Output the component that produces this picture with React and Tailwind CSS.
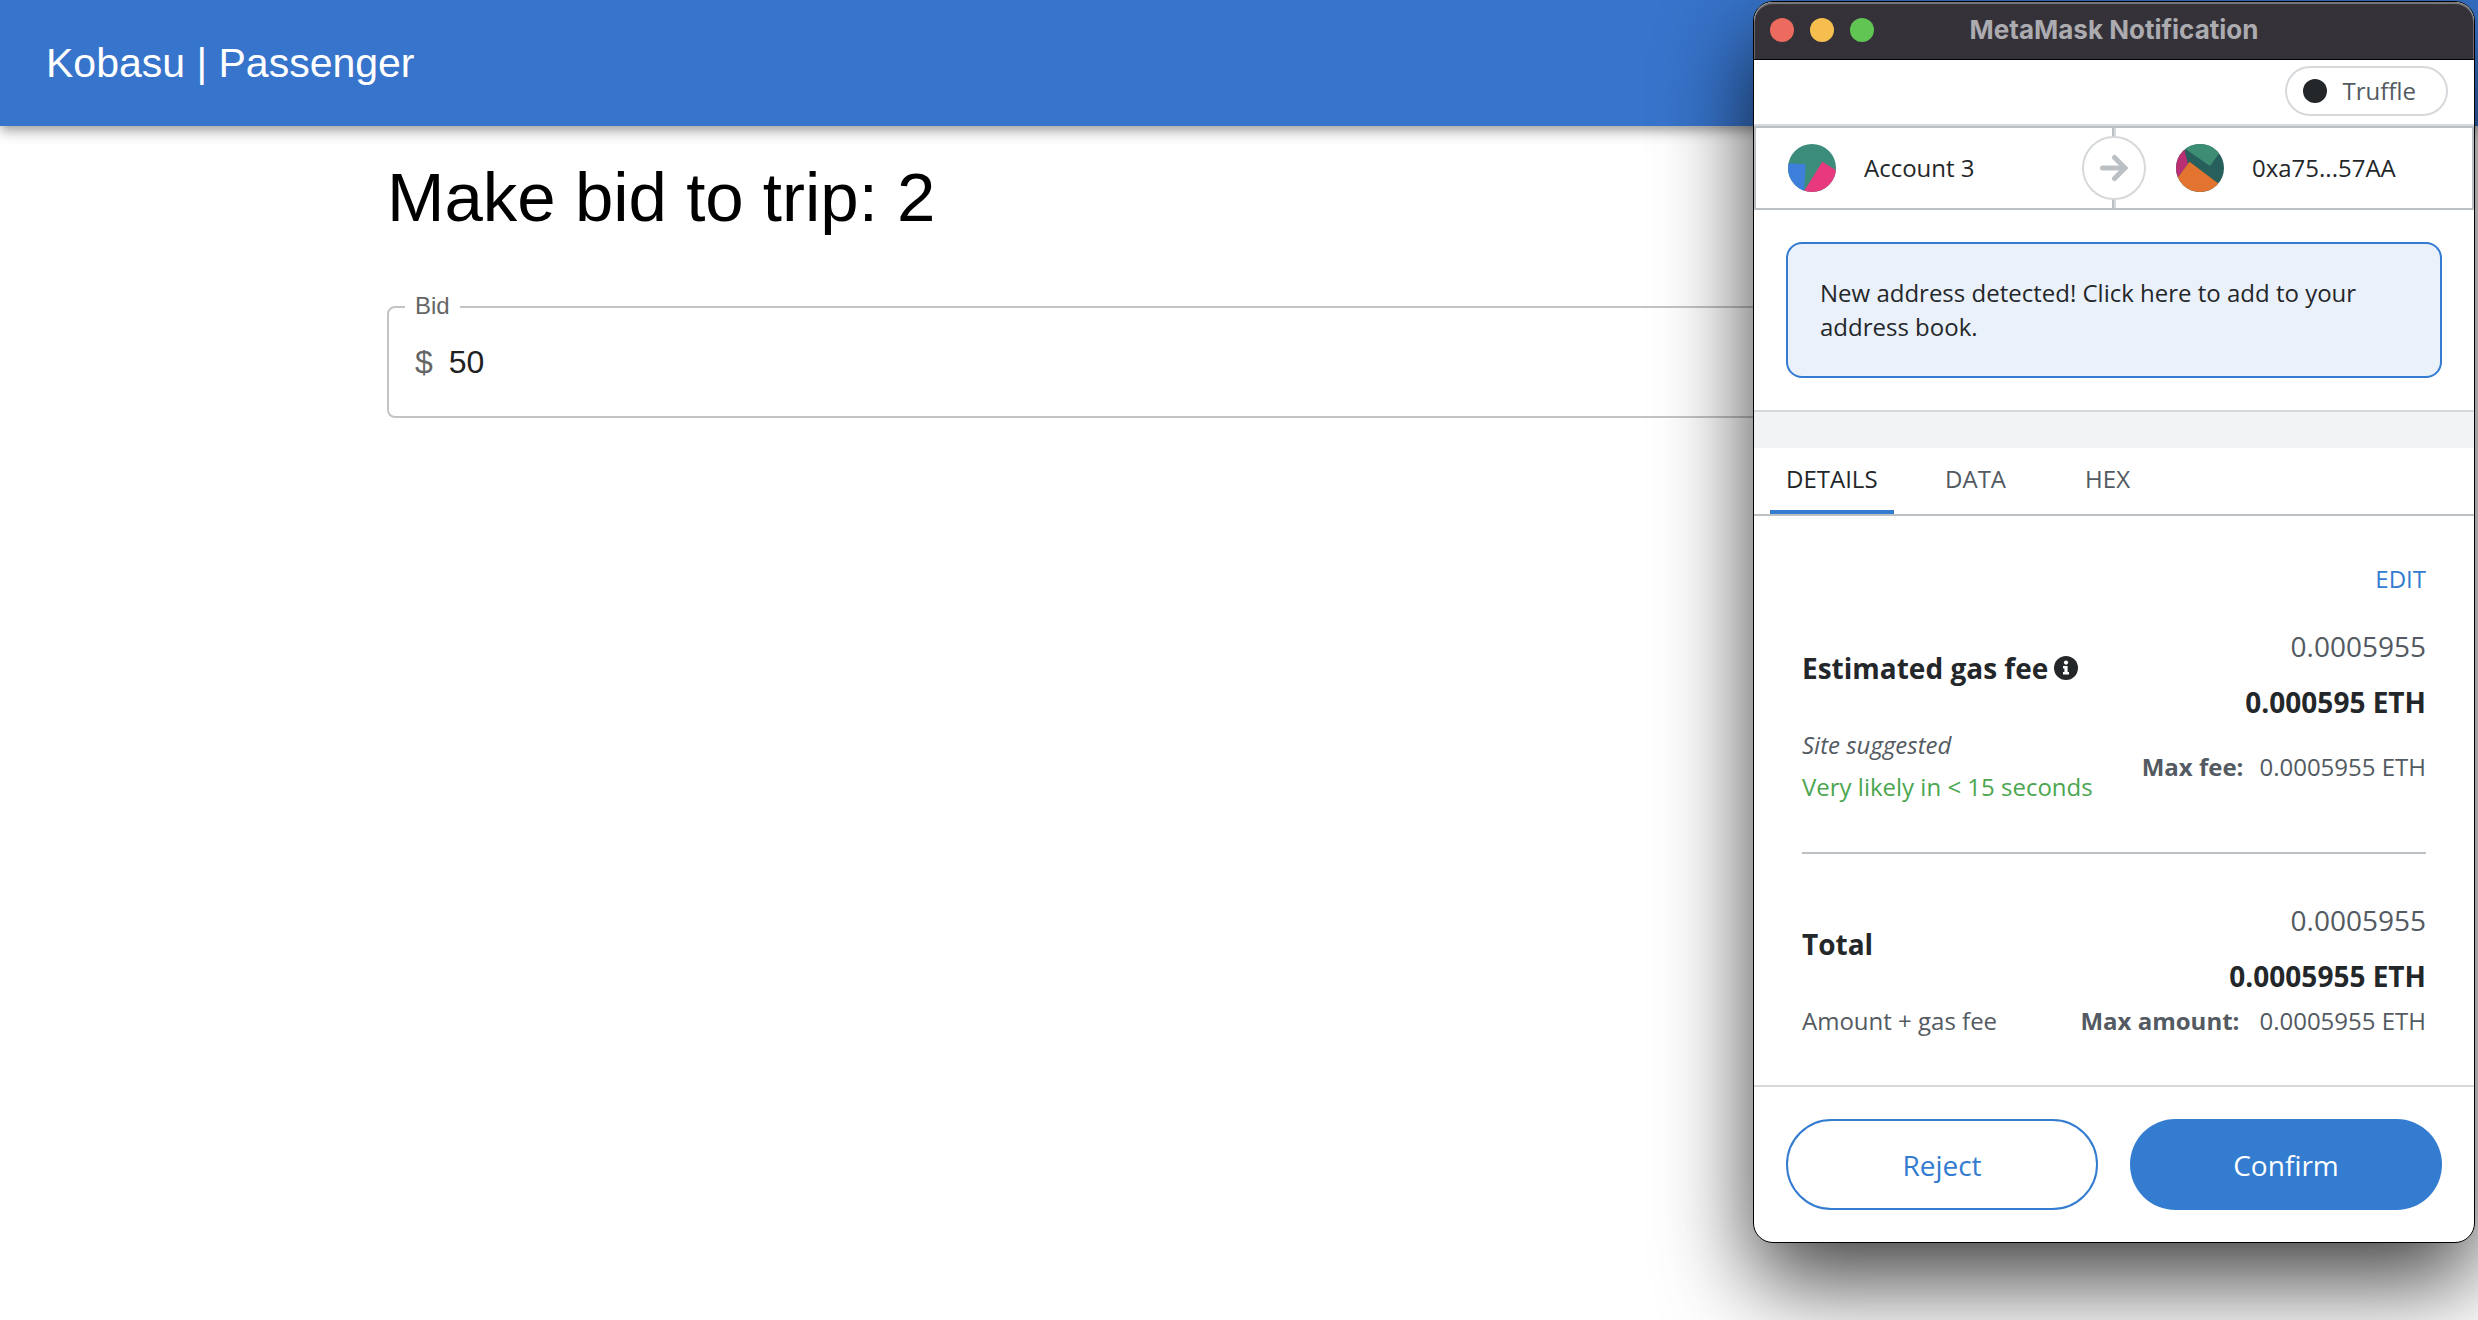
import React from "react";

function AppBar() {
  return (
    <header className="flex h-[126px] items-center bg-[#3774cb] px-[46px] shadow-[0_4px_8px_-2px_rgba(0,0,0,0.2),0_8px_10px_rgba(0,0,0,0.14),0_2px_20px_rgba(0,0,0,0.12)]">
      <span className="text-[41px] leading-[62px] text-white">Kobasu | Passenger</span>
    </header>
  );
}

function BidForm() {
  return (
    <main className="mx-auto max-w-[1800px] px-12 pt-[30px]">
      <h1 className="text-[69px] leading-[84px] text-black">Make bid to trip: 2</h1>
      <div className="relative mt-[66px] flex h-28 items-center gap-4 rounded-lg border-2 border-[#c4c4c4] px-[26px] text-[32px]">
        <label htmlFor="bid" className="absolute -top-4 left-4 bg-white px-[10px] text-[24px] leading-[28px] text-[#666666]">
          Bid
        </label>
        <span className="text-[#666666]">$</span>
        <input
          id="bid"
          type="text"
          inputMode="decimal"
          defaultValue="50"
          className="min-w-0 flex-1 bg-transparent text-[#212121] outline-none"
        />
      </div>
    </main>
  );
}

function TitleBar() {
  return (
    <div className="grid h-[58px] grid-cols-[1fr_auto_1fr] items-center rounded-t-[19px] border-b border-black bg-[#343238] px-4 pb-[2px] shadow-[inset_0_2px_1px_rgba(255,255,255,0.35),inset_1px_0_0_rgba(255,255,255,0.25),inset_-1px_0_0_rgba(255,255,255,0.25)]">
      <div className="flex gap-4">
        <button type="button" aria-label="Close" className="size-6 rounded-full bg-[#ed6a5e]" />
        <button type="button" aria-label="Minimize" className="size-6 rounded-full bg-[#f5be4f]" />
        <button type="button" aria-label="Zoom" className="size-6 rounded-full bg-[#61c554]" />
      </div>
      <h2 className="font-['Inter',sans-serif] text-[26px] leading-[32px] font-bold text-[#acabb0]">
        MetaMask Notification
      </h2>
    </div>
  );
}

function Network() {
  return (
    <div className="flex justify-end border-b-2 border-[#d6d9dc] px-[26px] pt-[6px] pb-2">
      <div className="flex h-[50px] items-center gap-4 rounded-full border-2 border-[#d6d9dc] pr-[30px] pl-4 text-[#535a61]">
        <span className="size-6 rounded-full bg-[#24272a]" />
        Truffle
      </div>
    </div>
  );
}

function AvatarOne() {
  return (
    <svg viewBox="0 0 48 48" className="size-12 rounded-full" aria-hidden="true">
      <rect width="48" height="48" fill="#3c8c7c" />
      <path d="M0 19.3 17.7 20.3 16 48H0Z" fill="#3f7fdc" />
      <path d="M34.3 17.7 48 26.3V48H15.5Z" fill="#e8397f" />
    </svg>
  );
}

function AvatarTwo() {
  return (
    <svg viewBox="0 0 48 48" className="size-12 rounded-full" aria-hidden="true">
      <rect width="48" height="48" fill="#265f5b" />
      <path d="M10 5.5 34 22 43 9.5V0H8Z" fill="#3d8d74" />
      <path d="M8.5 6 12 20 0 36V6Z" fill="#b92f73" />
      <path d="M13.5 17.7 43 40V48H0V36Z" fill="#e2742f" />
    </svg>
  );
}

function Parties() {
  return (
    <div className="grid h-[84px] grid-cols-2 border-2 border-[#bbc0c5] text-[#24272a]">
      <div className="relative flex items-center gap-7 border-r-2 border-[#bbc0c5] pl-8">
        <AvatarOne />
        <span>Account 3</span>
        <span className="absolute top-1/2 -right-[34px] z-10 flex size-16 -translate-y-1/2 items-center justify-center rounded-full border-2 border-[#d6d9dc] bg-white">
          <svg viewBox="0 0 28 28" className="size-7" fill="none" stroke="#bbc0c5" strokeWidth="5" aria-hidden="true">
            <path d="M2.5 14H24" strokeLinecap="round" />
            <path d="M14.5 3.5 25 14 14.5 24.5" strokeLinecap="round" strokeLinejoin="miter" />
          </svg>
        </span>
      </div>
      <div className="flex items-center gap-7 border-l-2 border-[#d6d9dc] pl-[60px]">
        <AvatarTwo />
        <span>0xa75...57AA</span>
      </div>
    </div>
  );
}

function Notice() {
  return (
    <div className="border-b-2 border-[#d6d9dc] p-8">
      <button
        type="button"
        className="block w-full rounded-2xl border-2 border-[#337cd0] bg-[#eaf1fa] px-8 py-8 text-left leading-[34px] text-[#24272a]"
      >
        New address detected! Click here to add to your address book.
      </button>
    </div>
  );
}

function Tabs() {
  return (
    <div role="tablist" className="flex gap-8 border-b-2 border-[#bbc0c5] px-4 leading-[34px] text-[#535a61]">
      <button type="button" role="tab" aria-selected="true" className="h-[66px] border-b-4 border-[#337cd0] px-4 text-[#24272a]">
        DETAILS
      </button>
      <button type="button" role="tab" aria-selected="false" className="h-[66px] min-w-[100px] border-b-4 border-transparent px-4">
        DATA
      </button>
      <button type="button" role="tab" aria-selected="false" className="h-[66px] min-w-[100px] border-b-4 border-transparent px-4">
        HEX
      </button>
    </div>
  );
}

function InfoIcon() {
  return (
    <svg viewBox="0 0 24 24" className="size-6" role="img" aria-label="Info">
      <circle cx="12" cy="12" r="12" fill="#24272a" />
      <circle cx="12" cy="6.6" r="2.1" fill="#fff" />
      <path d="M9 10h4.6v6H15v2.4H9V16h1.4v-3.6H9Z" fill="#fff" />
    </svg>
  );
}

function GasFee() {
  return (
    <section className="mx-12 flex flex-col border-b-2 border-[#bbc0c5] pt-[46px] pb-11">
      <button type="button" className="self-end leading-[34px] text-[#337cd0]">
        EDIT
      </button>
      <div className="mt-[30px] flex justify-between">
        <div className="pt-[22px]">
          <h3 className="flex items-center gap-[6px] text-[28px] leading-[40px] font-bold text-[#24272a]">
            Estimated gas fee <InfoIcon />
          </h3>
          <p className="mt-9 leading-[42px] italic">Site suggested</p>
          <p className="leading-[42px] text-[#4ba64f]">Very likely in &lt; 15 seconds</p>
        </div>
        <div className="text-right">
          <p className="text-[28px] leading-[40px]">0.0005955</p>
          <p className="mt-4 text-[28px] leading-[40px] font-bold text-[#24272a]">0.000595 ETH</p>
          <p className="mt-6 flex justify-end gap-4 leading-[42px]">
            <b>Max fee:</b>
            <span>0.0005955 ETH</span>
          </p>
        </div>
      </div>
    </section>
  );
}

function Total() {
  return (
    <section className="mx-12 flex justify-between pt-[46px] pb-[43px]">
      <div className="flex flex-col justify-between pt-6">
        <h3 className="text-[28px] leading-[40px] font-bold text-[#24272a]">Total</h3>
        <p className="leading-[42px]">Amount + gas fee</p>
      </div>
      <div className="text-right">
        <p className="text-[28px] leading-[40px]">0.0005955</p>
        <p className="mt-4 text-[28px] leading-[40px] font-bold text-[#24272a]">0.0005955 ETH</p>
        <p className="mt-1 flex justify-end gap-5 leading-[42px]">
          <b>Max amount:</b>
          <span>0.0005955 ETH</span>
        </p>
      </div>
    </section>
  );
}

function Actions() {
  return (
    <div className="grid grid-cols-2 gap-8 border-t-2 border-[#d6d9dc] p-8 text-[28px]">
      <button type="button" className="h-[91px] rounded-full border-2 border-[#337cd0] text-[#337cd0]">
        Reject
      </button>
      <button type="button" className="h-[91px] rounded-full bg-[#337cd0] text-white">
        Confirm
      </button>
    </div>
  );
}

function WalletWindow() {
  return (
    <aside className="absolute top-px right-[3px] w-[722px] rounded-[20px] border border-black bg-white font-['Open_Sans',sans-serif] text-[24px] text-[#535a61] shadow-[0_38px_90px_rgba(0,0,0,0.75)]">
      <TitleBar />
      <Network />
      <Parties />
      <Notice />
      <div className="h-9 bg-[#f2f3f4]" />
      <Tabs />
      <GasFee />
      <Total />
      <Actions />
    </aside>
  );
}

export default function App() {
  return (
    <div className="relative min-h-screen overflow-hidden bg-white font-['Liberation_Sans',Arial,sans-serif]">
      <AppBar />
      <BidForm />
      <WalletWindow />
    </div>
  );
}
